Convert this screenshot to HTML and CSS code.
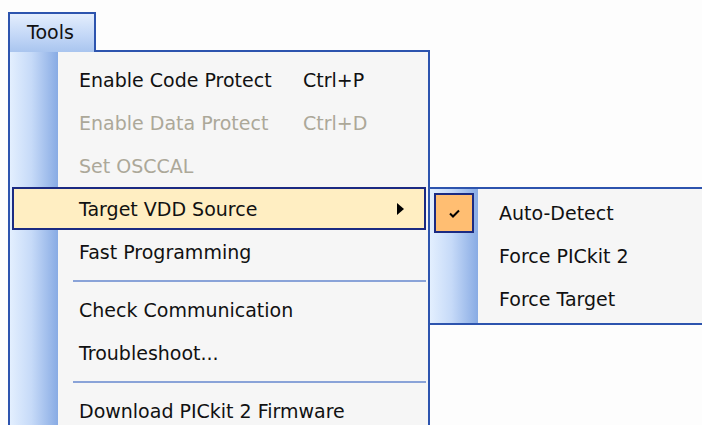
FILE: index.html
```html
<!DOCTYPE html>
<html lang="en">
<head>
<meta charset="utf-8">
<title>Tools menu</title>
<link rel="stylesheet" href="styles.css">
</head>
<body>
<div class="screen">
  <div class="menubar">
    <div class="tab">Tools</div>
  </div>

  <div class="menu">
    <div class="item"><span class="label">Enable Code Protect</span><span class="key">Ctrl+P</span></div>
    <div class="item disabled"><span class="label">Enable Data Protect</span><span class="key">Ctrl+D</span></div>
    <div class="item disabled"><span class="label">Set OSCCAL</span></div>
    <div class="item selected"><span class="label">Target VDD Source</span><span class="key"></span><span class="arrow"></span></div>
    <div class="item"><span class="label">Fast Programming</span></div>
    <div class="sep"></div>
    <div class="item"><span class="label">Check Communication</span></div>
    <div class="item"><span class="label">Troubleshoot...</span></div>
    <div class="sep"></div>
    <div class="item"><span class="label">Download PICkit 2 Firmware</span></div>
  </div>

  <div class="submenu">
    <div class="sub-item">
      <span class="icon-cell">
        <span class="check">
          <svg width="11" height="9" viewBox="0 0 11 9"><polyline points="1,4.5 4,7.5 10,1.5" fill="none" stroke="#000" stroke-width="2"/></svg>
        </span>
      </span>
      <span class="sub-label">Auto-Detect</span>
    </div>
    <div class="sub-item">
      <span class="icon-cell"></span>
      <span class="sub-label">Force PICkit 2</span>
    </div>
    <div class="sub-item">
      <span class="icon-cell"></span>
      <span class="sub-label">Force Target</span>
    </div>
  </div>
</div>
</body>
</html>
```

FILE: styles.css
```css
html, body {
  margin: 0;
  padding: 0;
  background: #fdfdfd;
}

.screen {
  position: relative;
  width: 702px;
  height: 425px;
  overflow: hidden;
  font-family: "DejaVu Sans", Verdana, sans-serif;
  font-size: 19px;
  color: #111;
}

/* top-level menu bar with the open "Tools" entry */
.menubar {
  padding: 12px 0 0 8px;
  height: 38px;
}

.tab {
  position: relative;
  z-index: 2;
  box-sizing: border-box;
  width: 88px;
  height: 40px;
  padding: 7px 0 0 17px;
  border: 2px solid #2d54ae;
  border-bottom: 0;
  background: linear-gradient(to bottom, #e4eefd, #c4d8f7 55%, #a9c5ef);
}

/* drop-down panel */
.menu {
  position: relative;
  z-index: 1;
  box-sizing: border-box;
  margin-left: 8px;
  width: 422px;
  height: 400px;
  padding-top: 6px;
  border: 2px solid #2d54ae;
  background:
    linear-gradient(to right, #e3effe, #c6daf8 45%, #88abe4) 0 0 / 48px 100% no-repeat,
    #f6f6f6;
}

.item {
  display: flex;
  align-items: center;
  box-sizing: border-box;
  height: 43px;
  margin: 0 2px;
  padding-left: 65px;
  border: 2px solid transparent;
  white-space: nowrap;
}

.item .label {
  width: 224px;
}

.item .key {
  width: 94px;
}

.item.disabled {
  color: #aca899;
}

.item.selected {
  background: #ffeec2;
  border-color: #1b2a82;
}

.arrow {
  width: 0;
  height: 0;
  border-left: 7px solid #000;
  border-top: 6px solid transparent;
  border-bottom: 6px solid transparent;
}

.sep {
  display: flex;
  align-items: center;
  height: 15px;
  padding: 0 2px 0 63px;
}

.sep::before {
  content: "";
  flex: 1;
  height: 2px;
  background: #8aa3d8;
}

/* cascading sub-menu of "Target VDD Source" */
.submenu {
  position: absolute;
  z-index: 3;
  left: 428px;
  top: 187px;
  box-sizing: border-box;
  width: 300px;
  height: 138px;
  padding-top: 2px;
  border: 2px solid #2d54ae;
  background:
    linear-gradient(to right, #e3effe, #c6daf8 45%, #88abe4) 0 0 / 48px 100% no-repeat,
    #f6f6f6;
}

.sub-item {
  display: flex;
  height: 43px;
  white-space: nowrap;
}

.icon-cell {
  box-sizing: border-box;
  width: 48px;
  padding: 2px 0 0 4px;
}

.check {
  display: flex;
  align-items: center;
  justify-content: center;
  box-sizing: border-box;
  width: 40px;
  height: 40px;
  border: 2px solid #1b2a82;
  background: #ffbe72;
}

.sub-label {
  display: flex;
  align-items: center;
  padding-left: 21px;
}
```
